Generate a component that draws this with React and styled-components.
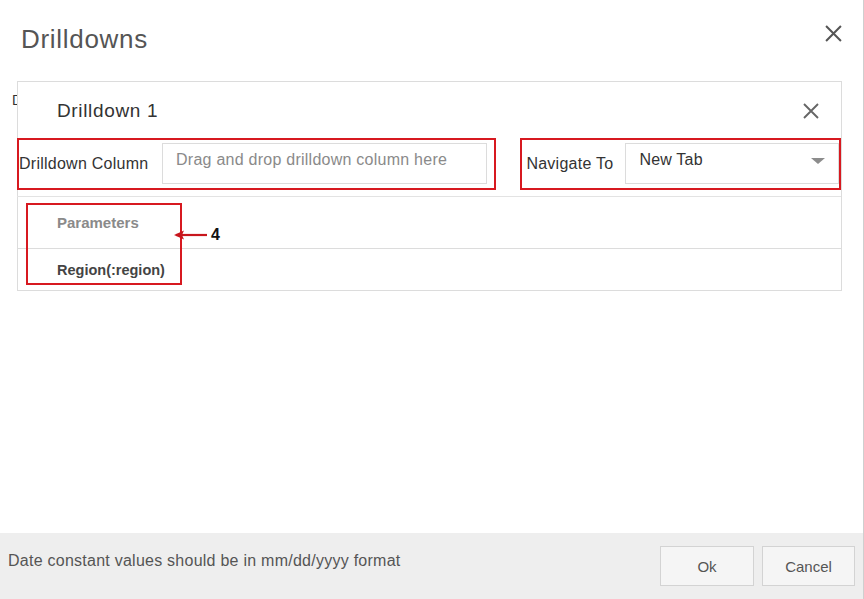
import React from "react";
import styled, { createGlobalStyle } from "styled-components";

const GlobalStyle = createGlobalStyle`
  body {
    margin: 0;
    font-family: "Liberation Sans", Helvetica, Arial, sans-serif;
    background: #fff;
  }
`;

const Page = styled.div`
  width: 864px;
  height: 599px;
  box-sizing: border-box;
  border-right: 1px solid #cfcfcf;
  display: flex;
  flex-direction: column;
  overflow: hidden;
`;

const Header = styled.div`
  display: flex;
  justify-content: space-between;
  align-items: flex-start;
  padding: 0 21px 0 21px;
`;

const Title = styled.h1`
  margin: 24px 0 0;
  font-size: 26px;
  line-height: 30px;
  font-weight: normal;
  letter-spacing: 0.7px;
  color: #555;
`;

const CloseButton = styled.button`
  margin-top: ${(p) => p.$top}px;
  padding: 0;
  border: 0;
  background: none;
  width: ${(p) => p.$size}px;
  height: ${(p) => p.$size}px;
  display: flex;
  cursor: pointer;
`;

const Body = styled.div`
  flex: 1;
  display: flex;
  align-items: flex-start;
  padding: 27px 0 0 12px;
`;

const CutLabel = styled.span`
  width: 5px;
  overflow: hidden;
  white-space: nowrap;
  margin-top: 11px;
  font-size: 14px;
  color: #333;
`;

const Card = styled.div`
  position: relative;
  width: 825px;
  box-sizing: border-box;
  border: 1px solid #dcdcdc;
`;

const CardHeader = styled.div`
  height: 56px;
  display: flex;
  align-items: center;
  justify-content: space-between;
  padding: 1px 22px 0 39px;
  box-sizing: border-box;
`;

const CardTitle = styled.h2`
  margin: 0;
  font-size: 19px;
  font-weight: normal;
  letter-spacing: 0.65px;
  color: #333;
`;

const FieldRow = styled.div`
  display: flex;
  align-items: flex-start;
  gap: 24px;
  padding-bottom: 6px;
  margin-left: -1px;
  border-bottom: 1px solid #e3e3e3;
`;

const Highlight = styled.div`
  display: flex;
  align-items: center;
  width: ${(p) => p.$width}px;
  box-sizing: border-box;
  border: 2px solid #d71920;
  padding: 3px ${(p) => p.$right}px 4px 0;
`;

const FieldLabel = styled.label`
  flex: 0 0 auto;
  width: ${(p) => p.$width}px;
  margin-left: ${(p) => p.$indent || 0}px;
  font-size: 16px;
  letter-spacing: 0.25px;
  color: #333;
  white-space: nowrap;
`;

const DropZone = styled.div`
  flex: 1;
  height: 41px;
  box-sizing: border-box;
  border: 1px solid #dcdcdc;
  padding: 6px 13px 0;
  font-size: 16px;
  line-height: 20px;
  letter-spacing: 0.25px;
  color: #8a8a8a;
  white-space: nowrap;
`;

const Select = styled.div`
  flex: 1;
  height: 41px;
  box-sizing: border-box;
  border: 1px solid #dcdcdc;
  padding: 6px 13px 0;
  display: flex;
  align-items: flex-start;
  justify-content: space-between;
  font-size: 16px;
  line-height: 20px;
  letter-spacing: 0.2px;
  color: #333;
`;

const Caret = styled.span`
  margin-top: 8px;
  width: 0;
  height: 0;
  border-left: 7px solid transparent;
  border-right: 7px solid transparent;
  border-top: 6px solid #8c8c8c;
`;

const ParamRow = styled.div`
  height: ${(p) => p.$height}px;
  display: flex;
  align-items: center;
  padding-left: 39px;
  border-bottom: ${(p) => (p.$line ? "1px solid #dcdcdc" : "0")};
  font-size: ${(p) => p.$size}px;
  font-weight: bold;
  color: ${(p) => p.$color};
`;

const Marker = styled.div`
  position: absolute;
  left: 8px;
  top: 121px;
  width: 156px;
  height: 82px;
  box-sizing: border-box;
  border: 2px solid #d71920;
  pointer-events: none;
`;

const Callout = styled.div`
  position: absolute;
  left: 153px;
  top: 144px;
  display: flex;
  align-items: center;
  font-size: 16px;
  font-weight: bold;
  color: #111;
`;

const Footer = styled.div`
  height: 66px;
  background: #eeeeee;
  display: flex;
  align-items: center;
  justify-content: space-between;
  padding: 0 8px;
`;

const Note = styled.span`
  margin-top: -10px;
  font-size: 16px;
  letter-spacing: 0.25px;
  color: #555;
`;

const Actions = styled.div`
  display: flex;
  gap: 8px;
`;

const Button = styled.button`
  width: ${(p) => p.$width}px;
  height: 40px;
  background: #f5f5f5;
  border: 1px solid #d3d3d3;
  font-family: inherit;
  font-size: 15px;
  color: #555;
  cursor: pointer;
`;

const CloseIcon = ({ size, color }) => (
  <svg width={size} height={size} viewBox="0 0 16 16">
    <path d="M1 1L15 15M15 1L1 15" stroke={color} strokeWidth="1.9" fill="none" />
  </svg>
);

export default function App() {
  return (
    <>
      <GlobalStyle />
      <Page>
        <Header>
          <Title>Drilldowns</Title>
          <CloseButton $top={25} $size={17} aria-label="Close">
            <CloseIcon size={17} color="#555" />
          </CloseButton>
        </Header>

        <Body>
          <CutLabel>Drilldown</CutLabel>
          <Card>
            <CardHeader>
              <CardTitle>Drilldown 1</CardTitle>
              <CloseButton $top={0} $size={16} aria-label="Remove">
                <CloseIcon size={16} color="#666" />
              </CloseButton>
            </CardHeader>

            <FieldRow>
              <Highlight $width={480} $right={7}>
                <FieldLabel $width={143}>Drilldown Column</FieldLabel>
                <DropZone>Drag and drop drilldown column here</DropZone>
              </Highlight>
              <Highlight $width={321} $right={0}>
                <FieldLabel $width={99} $indent={4}>Navigate To</FieldLabel>
                <Select>
                  New Tab
                  <Caret />
                </Select>
              </Highlight>
            </FieldRow>

            <ParamRow $height={51} $line $size={15} $color="#8a8a8a">
              Parameters
            </ParamRow>
            <ParamRow $height={41} $size={14.5} $color="#444">
              Region(:region)
            </ParamRow>

            <Marker />
            <Callout>
              <svg width="40" height="14" viewBox="0 0 40 14">
                <path d="M5 7H36" stroke="#c8161d" strokeWidth="2.2" />
                <path d="M3 7L13 2.5L11 7L13 11.5Z" fill="#c8161d" />
              </svg>
              <span>4</span>
            </Callout>
          </Card>
        </Body>

        <Footer>
          <Note>Date constant values should be in mm/dd/yyyy format</Note>
          <Actions>
            <Button $width={94}>Ok</Button>
            <Button $width={93}>Cancel</Button>
          </Actions>
        </Footer>
      </Page>
    </>
  );
}
